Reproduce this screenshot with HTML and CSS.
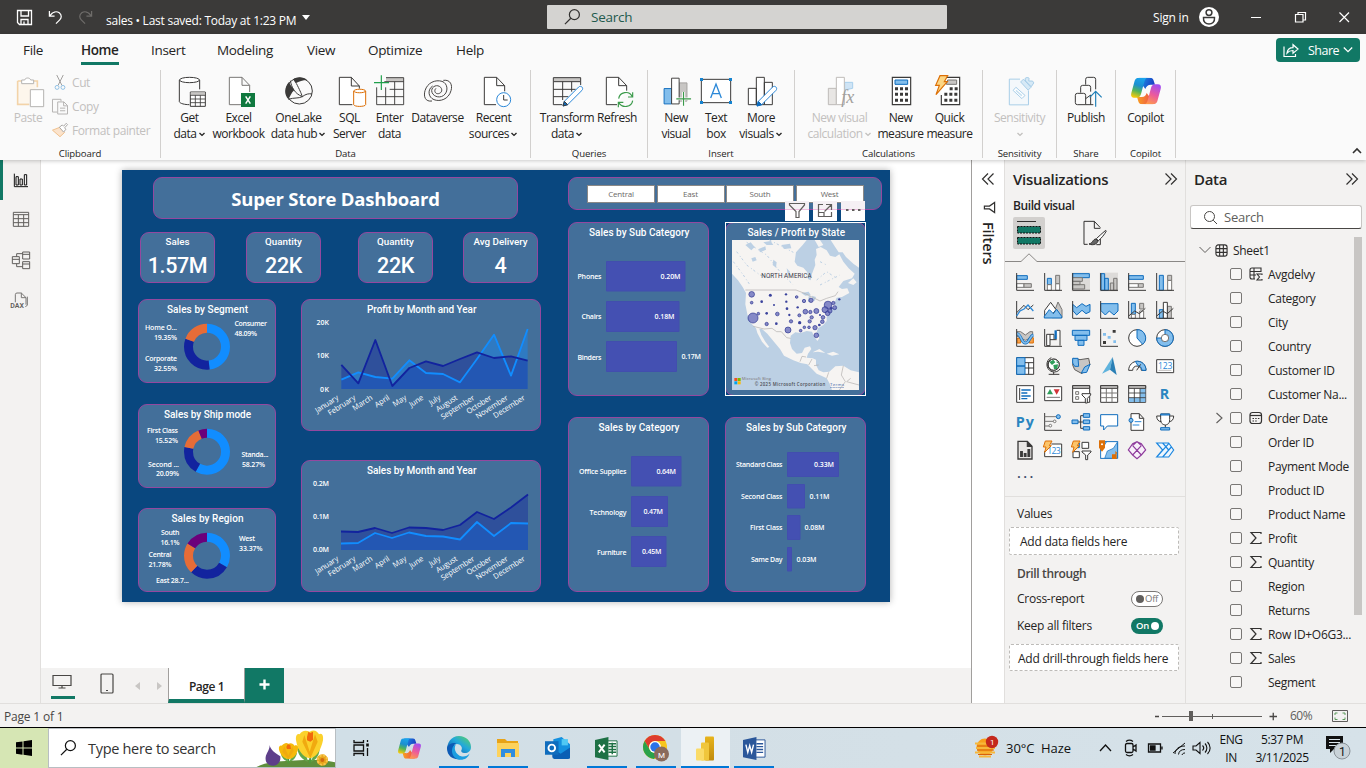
FILE: index.html
```html
<!DOCTYPE html>
<html lang="en">
<head>
<meta charset="utf-8">
<title>sales</title>
<link rel="stylesheet" href="styles.css">
</head>
<body>
<svg class="defs" width="0" height="0" aria-hidden="true">
  <defs>
    <linearGradient id="cpA" x1="0.6" y1="0" x2="0.3" y2="1"><stop offset="0" stop-color="#1aa5ee"/><stop offset=".4" stop-color="#1b8fd0"/><stop offset=".68" stop-color="#52b45a"/><stop offset="1" stop-color="#f5c90a"/></linearGradient>
    <linearGradient id="cpB" x1="0.7" y1="0" x2="0.3" y2="1"><stop offset="0" stop-color="#a44df0"/><stop offset=".5" stop-color="#ec5a9c"/><stop offset="1" stop-color="#ff9b4a"/></linearGradient>
    <linearGradient id="cpC" x1="0" y1="0" x2="1" y2="0.3"><stop offset="0" stop-color="#1a9be8"/><stop offset="1" stop-color="#1b3fc4"/></linearGradient>
    <linearGradient id="cpD" x1="0" y1="0" x2="1" y2="0"><stop offset="0" stop-color="#f8a020"/><stop offset="1" stop-color="#ee4a4e"/></linearGradient>
    <linearGradient id="edge" x1="1" y1="0" x2="0" y2="1"><stop offset="0" stop-color="#5fd65a"/><stop offset=".45" stop-color="#22a8dc"/><stop offset="1" stop-color="#0c4fa8"/></linearGradient>
    <linearGradient id="pbi" x1="0" y1="0" x2="0" y2="1"><stop offset="0" stop-color="#e8b41c"/><stop offset="1" stop-color="#c08a0c"/></linearGradient>
    <symbol id="copilot" viewBox="0 0 90 80">
      <path fill="url(#cpC)" d="M24 0H56C65 0 67 4 69 12L72 21H60C50 21 46 26 43 34L34 22Z"/>
      <path fill="url(#cpD)" d="M66 80H34C25 80 23 76 21 68L18 58H30C40 59 44 54 47 46L56 58Z"/>
      <path fill="url(#cpA)" d="M24 0H52C44 0 42 5 40 12L30 49C28 56 24 60 18 60H9C1 60-1 54 1 46L11 9C13 3 17 0 24 0Z"/>
      <path fill="url(#cpB)" d="M66 80H38C46 80 48 75 50 68L60 31C62 24 66 20 72 20H81C89 20 91 26 89 34L79 71C77 77 73 80 66 80Z"/>
    </symbol>
    <symbol id="caret" viewBox="0 0 8 8"><path d="M1.500 3L4 5.400 6.500 3" fill="none" stroke="currentColor" stroke-width="1.400"/></symbol>
    <symbol id="sigma" viewBox="0 0 14 14"><path d="M12 3V1.500H2L7 7 2 12.500H12V11" fill="none" stroke="#323130" stroke-width="1.200"/></symbol>
  </defs>
</svg>

<header class="titlebar">
  <svg class="ti-save" viewBox="0 0 17 17"><path d="M1.500 1.500H15.500V15.500H3.500L1.500 13.500ZM5 1.500V7H12.500V1.500M5 15.500V10.500H12V15.500M8 12.500V15" /></svg>
  <svg class="ti-undo" viewBox="0 0 16 16"><path d="M1.500 1.500V7H7M2 6.500C5 2.500 9 1.500 12 3.500 15 6 14.500 9 12.500 11L8.500 15"/></svg>
  <svg class="ti-undo dim" viewBox="0 0 16 16"><path d="M14.500 1.500V7H9M14 6.500C11 2.500 7 1.500 4 3.500 1 6 1.500 9 3.500 11L7.500 15"/></svg>
  <span class="doc-name">sales • Last saved: Today at 1:23 PM</span>
  <span class="tri-down"></span>
  <div class="top-search">
    <svg viewBox="0 0 18 18"><circle cx="11" cy="6.500" r="5.300"/><path d="M7.200 10.300L1 16.500"/></svg>
    <span>Search</span>
  </div>
  <span class="signin">Sign in</span>
  <svg class="avatar" viewBox="0 0 20 20"><circle cx="10" cy="10" r="10" fill="#fff"/><g fill="none" stroke="#3b3a39" stroke-width="1.500"><circle cx="10" cy="5.600" r="2.900"/><path d="M4.500 10.500H15.500C16 15 13 17 10 17S4 15 4.500 10.500Z"/></g></svg>
  <svg class="win-btns" viewBox="0 0 110 20" fill="none" stroke="#fff" stroke-width="1.200"><path d="M9 10.500H19M97.500 5.500L107 15M107 5.500L97.500 15"/><path d="M53.500 7.500H61V15H53.500ZM56 7.500V5.500H63.500V13H61"/></svg>
</header>

<section class="ribbon">
  <nav class="tabs">
    <span class="tab t-file">File</span><span class="tab t-home active">Home</span><span class="tab t-insert">Insert</span><span class="tab t-model">Modeling</span><span class="tab t-view">View</span><span class="tab t-opt">Optimize</span><span class="tab t-help">Help</span>
    <button class="share"><svg viewBox="0 0 16 14" fill="none" stroke="#fff" stroke-width="1.200"><path d="M1 3V13H12.500V10.500M4 9.500C4.500 6 7 4.200 10 4.200V1.200L15 5.600 10 9.800V7C7.500 7 5.500 7.700 4 9.500Z"/></svg>Share<svg class="chev" viewBox="0 0 10 8" fill="none" stroke="#fff" stroke-width="1.300"><path d="M.8 1.500L5 5.700 9.200 1.500"/></svg></button>
  </nav>
  <div class="groups">
    <div class="group g-clip">
      <div class="btns">
        <div class="btn disabled paste"><svg class="ico" viewBox="36 225 96 102"><path d="M53 243H71M94 243H112V262M53 243V313H88" fill="none" stroke="#f3d3a8" stroke-width="5"/><path d="M58 248H106V308H58Z" fill="#fdf6ec"/><path d="M65 251V240H74C76 232 90 232 92 240H101V251Z" fill="#fff" stroke="#b5b3b1" stroke-width="3"/><path d="M91 269H131V320H91Z" fill="#fff" stroke="#b5b3b1" stroke-width="3"/></svg><b>Paste</b></div>
        <div class="clip-list disabled">
          <span><svg viewBox="156 222 48 52" fill="none" stroke-width="3"><path d="M170 225L186 257M190 225L174 257" stroke="#a19f9d"/><circle cx="171" cy="263" r="6" stroke="#8fc0e4"/><circle cx="189" cy="263" r="6" stroke="#8fc0e4"/></svg>Cut</span>
          <span><svg viewBox="156 292 48 52" fill="#fafafa" stroke="#b5b3b1" stroke-width="3"><path d="M172 335H157V296H183V302"/><path d="M173 304H192L203 315V341H173ZM191 304V316H203M180 323H196M180 331H196"/></svg>Copy</span>
          <span><svg viewBox="156 364 48 52"><path d="M157 389L180 380 194 396 180 409Z" fill="#fbe3cc" stroke="#f0c08c" stroke-width="3"/><path d="M178 380L187 373 191 377 199 368 203 372 194 382 198 386 191 395Z" fill="#fff" stroke="#a8a6a4" stroke-width="3"/></svg>Format painter</span>
        </div>
      </div>
      <small>Clipboard</small>
    </div>
    <div class="group g-data">
      <div class="btns">
        <div class="btn w44"><svg class="ico" viewBox="519 225 96 102" fill="none" stroke="#3b3a39" stroke-width="3"><path d="M535 240V305C537 311 552 314 565 314M596 240V268" fill="none"/><ellipse cx="565.500" cy="240" rx="30" ry="8" fill="#fff"/><path d="M568 276H613V319H568Z" fill="#fff"/><path d="M569 277H612V285H569Z" fill="#c8c6c4" stroke="none"/><path d="M568 286H613M568 297H613M568 308H613M583 286V319M598 286V319" stroke-width="2.500"/></svg><b>Get<br>data<svg class="caret"><use href="#caret"/></svg></b></div>
        <div class="btn w54"><svg class="ico" viewBox="666 225 96 102"><path d="M720 314H685V232H723L746 256V276M723 232V256H746" fill="#fff" stroke="#797775" stroke-width="3"/><path d="M720 279H762V321H720Z" fill="#10793f"/><path d="M734 289L748 311M748 289L734 311" stroke="#fff" stroke-width="4.500"/></svg><b>Excel<br>workbook</b></div>
        <div class="btn w66"><svg class="ico" viewBox="846 225 96 102"><path d="M864 246C850 262 848 282 862 298 868 290 870 278 880 270 874 262 868 256 864 246ZM876 238C888 229 908 229 918 240 906 240 894 244 884 250Z" fill="#3b3a39"/><g fill="none" stroke="#3b3a39" stroke-width="3"><circle cx="895" cy="273" r="39"/><path d="M868 242C872 262 880 280 904 290 914 282 924 280 933 282M886 250C896 270 900 278 904 290M862 298C880 292 892 296 904 290"/></g></svg><b>OneLake<br>data hub<svg class="caret"><use href="#caret"/></svg></b></div>
        <div class="btn w36"><svg class="ico" viewBox="999 225 96 102" fill="#fff" stroke="#3b3a39" stroke-width="3"><path d="M1054 314H1015V232H1051L1075 258V266M1051 232V258H1075"/><path d="M1058 273V314C1060 321 1092 321 1094 314V273C1092 266 1060 266 1058 273 1060 280 1092 280 1094 273" stroke="#dc6f06"/></svg><b>SQL<br>Server</b></div>
        <div class="btn w44"><svg class="ico" viewBox="1119 225 96 102" fill="none"><path d="M1155 233H1208V245H1155Z" fill="#c8c6c4"/><path d="M1155 233H1208V314H1127V262M1150 245H1208M1166 268H1208M1127 290H1208M1154 262V314M1181 245V314" stroke="#3b3a39" stroke-width="2.800"/><path d="M1141 226V270M1119 248H1164" stroke="#1fa04b" stroke-width="3.500"/></svg><b>Enter<br>data</b></div>
        <div class="btn w52"><svg class="ico" viewBox="1266 225 96 102" fill="none" stroke="#484644" stroke-width="3"><path d="M1296 303C1276 306 1270 290 1275 272 1282 248 1306 238 1326 244 1344 250 1346 276 1330 287 1316 296 1296 288 1295 272 1296 258 1312 252 1322 262M1330 241C1352 238 1358 256 1353 272 1346 298 1320 306 1302 299 1284 292 1282 268 1298 258M1322 262C1330 272 1322 282 1312 281 1304 280 1302 270 1308 265"/></svg><b>Dataverse</b></div>
        <div class="btn w60"><svg class="ico" viewBox="66 225 96 102" fill="#fff" stroke="#3b3a39" stroke-width="3"><path d="M120 314H85V232H122L146 257V274M122 232V257H146"/><circle cx="143" cy="299" r="21" stroke="#2b88d8"/><path d="M143 285V300H155" fill="none"/></svg><b>Recent<br>sources<svg class="caret"><use href="#caret"/></svg></b></div>
      </div>
      <small>Data</small>
    </div>
    <div class="group g-query">
      <div class="btns">
        <div class="btn w56"><svg class="ico" viewBox="288 225 96 102" fill="none" stroke="#3b3a39" stroke-width="3"><path d="M295 233H377V245H295Z" fill="#c8c6c4"/><path d="M295 245V314H322M377 245V255M295 268H362M295 290H340M323 245V300M350 245V275"/><path d="M324 318L328 304 371 261C378 255 387 264 381 271L338 314Z" fill="#fff" stroke="#2b88d8"/><path d="M324 318L328 304 338 314Z" fill="#0f6cbd"/></svg><b>Transform<br>data<svg class="caret"><use href="#caret"/></svg></b></div>
        <div class="btn w44"><svg class="ico" viewBox="438 225 96 102" fill="#fff" stroke="#3b3a39" stroke-width="3"><path d="M486 314H454V232H491L515 257V272M491 232V257H515"/><path d="M491 296C494 276 522 270 532 290M533 277V291H519M533 302C530 322 502 326 491 308M490 322V307H505" fill="none" stroke="#3a9a4a" stroke-width="3.500"/></svg><b>Refresh</b></div>
      </div>
      <small>Queries</small>
    </div>
    <div class="group g-insert">
      <div class="btns">
        <div class="btn w40"><svg class="ico" viewBox="612 225 102 102"><path d="M625 265H649V314H625Z" fill="#83beec" stroke="#0f6cbd" stroke-width="3"/><path d="M673 247H698V305H673Z" fill="#c8c6c4" stroke="#a19f9d" stroke-width="3"/><path d="M649 232H673V314H649Z" fill="#fff" stroke="#3b3a39" stroke-width="3"/><path d="M687 276V320M664 298H711" stroke="#fafafa" stroke-width="9"/><path d="M687 276V320M664 298H711" stroke="#3a9a4a" stroke-width="3.500"/></svg><b>New<br>visual</b></div>
        <div class="btn w40"><svg class="ico" viewBox="735 225 96 102"><path d="M739 238H827V308H739Z" fill="#fff" stroke="#3b3a39" stroke-width="3"/><path d="M735 234H744V243H735ZM822 234H831V243H822ZM735 303H744V312H735ZM822 303H831V312H822Z" fill="#1583d0"/><path d="M767 294L783 252 799 294M772 281H794" fill="none" stroke="#2b88d8" stroke-width="4"/></svg><b>Text<br>box</b></div>
        <div class="btn w50"><svg class="ico" viewBox="870 225 96 102" fill="#fff" stroke="#3b3a39" stroke-width="3"><path d="M880 265H904V314H880ZM928 247H952V314H928ZM904 232H928V314H904Z"/><path d="M906 318L910 304 953 261C960 255 969 264 963 271L920 314Z" stroke="#2b88d8"/><path d="M906 318L910 304 920 314Z" fill="#0f6cbd" stroke="#0f6cbd"/></svg><b>More<br>visuals<svg class="caret"><use href="#caret"/></svg></b></div>
      </div>
      <small>Insert</small>
    </div>
    <div class="group g-calc">
      <div class="btns">
        <div class="btn w78 disabled"><svg class="ico" viewBox="1104 225 96 102" stroke-width="3" stroke="#bebbb8"><path d="M1117 265H1141V314H1117Z" fill="#e8e6e4"/><path d="M1166 247H1190V265L1166 270Z" fill="#cfe4f5" stroke="#a8cfec"/><path d="M1141 232H1165V314H1141Z" fill="#fff"/><text x="1156" y="308" class="fx">fx</text></svg><b>New visual<br>calculation<svg class="caret"><use href="#caret"/></svg></b></div>
        <div class="btn w44"><svg class="ico" viewBox="1284 225 96 102"><path d="M1306 232H1361V314H1306Z" fill="#fff" stroke="#3b3a39" stroke-width="3.500"/><path d="M1314 240H1352V253H1314Z" fill="#83beec" stroke="#0f6cbd" stroke-width="3"/><path d="M1314 266H1356M1314 283H1356M1314 301H1356" stroke="#3b3a39" stroke-width="9" stroke-dasharray="9 6"/></svg><b>New<br>measure</b></div>
        <div class="btn w54"><svg class="ico" viewBox="81 225 96 102"><path d="M106 232H158V314H103V285" fill="#fff" stroke="#3b3a39" stroke-width="3.500"/><path d="M122 240H149V253H118Z" fill="#c8c6c4" stroke="#797775" stroke-width="3"/><path d="M128 266H152M112 283H152M112 301H152" stroke="#3b3a39" stroke-width="9" stroke-dasharray="9 6"/><path d="M99 227H122L112 245H121L87 284 97 256H86Z" fill="#fcd684" stroke="#dc6f06" stroke-width="3.500"/></svg><b>Quick<br>measure</b></div>
      </div>
      <small>Calculations</small>
    </div>
    <div class="group g-sens">
      <div class="btns">
        <div class="btn w72 disabled"><svg class="ico" viewBox="293 222 102 102" fill="#fff" stroke="#a3cbe6" stroke-width="3"><path d="M344 232H310V314H371V268" fill="#f4f8fb"/><path d="M331 258L360 284 350 294 322 268Z"/><path d="M331 268L350 285" stroke-width="5" stroke="#c5dff0"/><path d="M346 241L355 232 379 258 370 267ZM362 238L360 230C364 226 370 226 373 229L372 238 384 238 388 244 380 256Z" fill="#d6e9f6"/></svg><b>Sensitivity<br><svg class="caret solo"><use href="#caret"/></svg></b></div>
      </div>
      <small>Sensitivity</small>
    </div>
    <div class="group g-share">
      <div class="btns">
        <div class="btn w58"><svg class="ico" viewBox="492 225 96 102" fill="none" stroke="#3b3a39" stroke-width="3"><path d="M524 278V262Q524 256 530 256H548Q554 256 554 262V275M539 254V238Q539 232 545 232H563Q569 232 569 238V268M539 314H514Q508 314 508 308V286Q508 280 514 280H533Q539 280 539 286V314H562M539 296L554 285V314"/><path d="M569 320V276M551 292L569 274 587 292" stroke="#1f7fb8" stroke-width="3.500"/></svg><b>Publish</b></div>
      </div>
      <small>Share</small>
    </div>
    <div class="group g-cop">
      <div class="btns">
        <div class="btn w58"><svg class="ico" viewBox="-3 -8 96 102"><use href="#copilot" width="90" height="80"/></svg><b>Copilot</b></div>
      </div>
      <small>Copilot</small>
    </div>
    <svg class="collapse" viewBox="0 0 10 8" fill="none" stroke="#323130" stroke-width="1.600"><path d="M1 6L5 2 9 6"/></svg>
  </div>
</section>

<main class="work">
  <aside class="rail">
    <div class="rail-item on"><svg viewBox="36 35 54 51" fill="none" stroke="#111" stroke-width="3"><path d="M43 40V79H84M48 49H55V74H48ZM60 56H67V74H60ZM73 43H80V74H73Z"/></svg></div>
    <div class="rail-item"><svg viewBox="36 153 54 51" fill="none" stroke="#605e5c" stroke-width="3"><path d="M40 157H86V199H40ZM40 164H86M40 176H86M40 188H86M55 164V199M71 164V199"/></svg></div>
    <div class="rail-item"><svg viewBox="36 275 54 51" fill="none" stroke="#605e5c" stroke-width="3"><path d="M37 289H58V310H37ZM37 297H58M68 275H89V296H68ZM68 282H89M68 304H89V325H68ZM68 311H89M50 289V280H68M50 310V319H68"/></svg></div>
    <div class="rail-item"><svg viewBox="30 394 57 51" fill="none" stroke="#797775" stroke-width="3"><path d="M46 425V402Q46 397 51 397H64L78 411V432M64 397V411H78M82 408V434L76 438"/><text x="31" y="443" class="dax">DAX</text></svg></div>
  </aside>

  <section class="stage">
    <div class="canvas">
      <div class="report">
        <div class="left">
          <div class="tile heading">Super Store Dashboard</div>
          <div class="cards">
            <div class="tile card"><em>Sales</em><strong>1.57M</strong></div>
            <div class="tile card"><em>Quantity</em><strong>22K</strong></div>
            <div class="tile card"><em>Quantity</em><strong>22K</strong></div>
            <div class="tile card"><em>Avg Delivery</em><strong>4</strong></div>
          </div>
          <div class="pair">
            <div class="donuts">
              <div class="tile"><svg viewBox="139 300 136 82"><text class="tt" x="167" y="312.500" textLength="81">Sales by Segment</text>
                <g class="ring" transform="rotate(-90 207 346.700)"><circle cx="207" cy="346.700" r="18.500" pathLength="100" stroke="#118dff" stroke-dasharray="48.090 100"/><circle cx="207" cy="346.700" r="18.500" pathLength="100" stroke="#12239e" stroke-dasharray="32.550 100" stroke-dashoffset="-48.090"/><circle cx="207" cy="346.700" r="18.500" pathLength="100" stroke="#e66c37" stroke-dasharray="19.360 100" stroke-dashoffset="-80.640"/></g>
                <g class="lb"><text x="145" y="329.500" textLength="32">Home O...</text><text x="154" y="339.500" textLength="23">19.35%</text><text x="145" y="361.300" textLength="32">Corporate</text><text x="154" y="371.300" textLength="23">32.55%</text><text x="234.500" y="326.200" textLength="32.500">Consumer</text><text x="234.500" y="336.300" textLength="22.500">48.09%</text></g></svg></div>
              <div class="tile"><svg viewBox="139 405 136 82"><text class="tt" x="164" y="417.500" textLength="87">Sales by Ship mode</text>
                <g class="ring" transform="rotate(-90 207 451.700)"><circle cx="207" cy="451.700" r="18.500" pathLength="100" stroke="#118dff" stroke-dasharray="58.270 100"/><circle cx="207" cy="451.700" r="18.500" pathLength="100" stroke="#12239e" stroke-dasharray="20.090 100" stroke-dashoffset="-58.270"/><circle cx="207" cy="451.700" r="18.500" pathLength="100" stroke="#e66c37" stroke-dasharray="15.520 100" stroke-dashoffset="-78.360"/><circle cx="207" cy="451.700" r="18.500" pathLength="100" stroke="#6b007b" stroke-dasharray="6.120 100" stroke-dashoffset="-93.880"/></g>
                <g class="lb"><text x="147" y="433.300" textLength="31">First Class</text><text x="155" y="443.300" textLength="23">15.52%</text><text x="148" y="466.500" textLength="31">Second ...</text><text x="156" y="476.300" textLength="23">20.09%</text><text x="241.500" y="457.300" textLength="27">Standa...</text><text x="242" y="466.500" textLength="23">58.27%</text></g></svg></div>
              <div class="tile"><svg viewBox="139 509 136 82"><text class="tt" x="171.500" y="521.500" textLength="72">Sales by Region</text>
                <g class="ring" transform="rotate(-90 207 555.700)"><circle cx="207" cy="555.700" r="18.500" pathLength="100" stroke="#118dff" stroke-dasharray="33.370 100"/><circle cx="207" cy="555.700" r="18.500" pathLength="100" stroke="#12239e" stroke-dasharray="28.750 100" stroke-dashoffset="-33.370"/><circle cx="207" cy="555.700" r="18.500" pathLength="100" stroke="#e66c37" stroke-dasharray="21.780 100" stroke-dashoffset="-62.120"/><circle cx="207" cy="555.700" r="18.500" pathLength="100" stroke="#6b007b" stroke-dasharray="16.100 100" stroke-dashoffset="-83.900"/></g>
                <g class="lb"><text x="161" y="535" textLength="18.500">South</text><text x="160.500" y="545" textLength="19">16.1%</text><text x="148.500" y="557" textLength="23">Central</text><text x="148.500" y="567" textLength="23">21.78%</text><text x="156" y="583" textLength="33">East 28.7...</text><text x="239" y="541" textLength="16">West</text><text x="239" y="551" textLength="23.500">33.37%</text></g></svg></div>
            </div>
            <div class="trends">
              <div class="tile"><svg viewBox="302 300 238 130"><text class="tt" x="367" y="312.500" textLength="109.500">Profit by Month and Year</text>
                <g class="lb"><text x="316.500" y="325" textLength="12.500">20K</text><text x="316.500" y="358" textLength="12.500">10K</text><text x="320" y="392" textLength="9">0K</text></g>
                <g transform="translate(280 160) scale(.33333)"><path class="a1" d="M184 687V659L235 637 286 651 337 656 388 601 438 639 489 642 540 667 591 597 642 524 693 647 743 507V687Z"/><path class="a2" d="M184 687V615L235 670 286 540 337 678 388 624 438 604 489 618 540 597 591 577 642 594 693 589 743 602V687Z"/><path class="l1" d="M184 659L235 637 286 651 337 656 388 601 438 639 489 642 540 667 591 597 642 524 693 647 743 507"/><path class="l2" d="M184 615L235 670 286 540 337 678 388 624 438 604 489 618 540 597 591 577 642 594 693 589 743 602"/></g>
                <g class="lb mo"><text transform="translate(339 399) rotate(-33)">January</text><text transform="translate(356 399) rotate(-33)">February</text><text transform="translate(373 399) rotate(-33)">March</text><text transform="translate(390 399) rotate(-33)">April</text><text transform="translate(407 399) rotate(-33)">May</text><text transform="translate(424 399) rotate(-33)">June</text><text transform="translate(441 399) rotate(-33)">July</text><text transform="translate(458 399) rotate(-33)">August</text><text transform="translate(475 399) rotate(-33)">September</text><text transform="translate(492 399) rotate(-33)">October</text><text transform="translate(508.500 399) rotate(-33)">November</text><text transform="translate(525.500 399) rotate(-33)">December</text></g></svg></div>
              <div class="tile"><svg viewBox="302 461 238 130"><text class="tt" x="367" y="473.500" textLength="109.500">Sales by Month and Year</text>
                <g class="lb"><text x="313" y="486" textLength="16">0.2M</text><text x="313" y="519" textLength="16">0.1M</text><text x="313" y="552" textLength="16">0.0M</text></g>
                <path class="a1" d="M341 550V543.500L358 543 375 533 392 538 409 532.500 426 536 443 536.500 460 539.500 477 522 494 536 511 523 528 523.500V550Z"/><path class="a2" d="M341 550V531.500L358 532 375 528 392 533 409 527.500 426 528 443 530 460 525 477 512 494 519 511 507.500 528 494.500V550Z"/><path class="l1 px" d="M341 543.500L358 543 375 533 392 538 409 532.500 426 536 443 536.500 460 539.500 477 522 494 536 511 523 528 523.500"/><path class="l2 px" d="M341 531.500L358 532 375 528 392 533 409 527.500 426 528 443 530 460 525 477 512 494 519 511 507.500 528 494.500"/>
                <g class="lb mo"><text transform="translate(339 560) rotate(-33)">January</text><text transform="translate(356 560) rotate(-33)">February</text><text transform="translate(373 560) rotate(-33)">March</text><text transform="translate(390 560) rotate(-33)">April</text><text transform="translate(407 560) rotate(-33)">May</text><text transform="translate(424 560) rotate(-33)">June</text><text transform="translate(441 560) rotate(-33)">July</text><text transform="translate(458 560) rotate(-33)">August</text><text transform="translate(475 560) rotate(-33)">September</text><text transform="translate(492 560) rotate(-33)">October</text><text transform="translate(508.500 560) rotate(-33)">November</text><text transform="translate(525.500 560) rotate(-33)">December</text></g></svg></div>
            </div>
          </div>
        </div>
        <div class="right">
          <div class="tile slicer"><span>Central</span><span>East</span><span>South</span><span>West</span></div>
          <div class="quad">
            <div class="tile"><svg viewBox="569 223 139 172"><text class="tt" x="589" y="235.500" textLength="100.500">Sales by Sub Category</text>
              <path class="bar" d="M606.500 261.500H685V291H606.500ZM606.500 301.500H679V331.500H606.500ZM606.500 341.500H676.500V371.500H606.500Z"/>
              <g class="lb"><text x="577.500" y="279" textLength="24">Phones</text><text x="581.500" y="319" textLength="20">Chairs</text><text x="577.500" y="360" textLength="24">Binders</text><text x="660.500" y="279" textLength="20">0.20M</text><text x="654.500" y="319" textLength="20">0.18M</text><text x="681.500" y="359" textLength="19.500">0.17M</text></g></svg></div>
            <div class="tile selected"><svg viewBox="726 223 139 172"><text class="tt" x="747.500" y="235.500" textLength="97.500">Sales / Profit by State</text>
              <svg x="732" y="240" width="127" height="150" viewBox="516 225 381 450">
                <path fill="#bcd0e4" d="M516 225H897V675H516Z"/>
                <path fill="#f6f4f2" d="M516 225H740L728 240 708 262 704 290 712 302 730 308 742 322 744 342 752 346 756 326 760 316 766 300 764 284 770 270 768 252 782 246 800 256 810 272 826 276 838 268 850 290 866 310 884 326 876 340 850 348 836 366 846 372 862 370 868 384 846 396 830 398 824 412 826 428 814 432 808 446 800 456 800 468 790 480 774 490 770 502 778 520 772 528 762 514 756 500 740 498 722 504 706 502 692 512 690 534 696 552 710 566 726 564 734 548 750 544 754 552 744 566 740 578 758 580 768 584 768 600 776 616 790 622 808 620 826 604 850 602 872 616 897 622V675H816L808 654 800 640 784 632 770 626 756 612 742 598 722 594 700 586 672 572 660 552 640 528 622 506 606 492 598 492 604 510 616 530 628 546 622 548 606 530 592 504 588 490 572 474 562 448 556 418 558 384 548 366 534 346 516 326Z"/>
                <path fill="#f6f4f2" d="M764 225H780L790 240 776 246ZM812 225H897V308L880 296 858 276 848 262 836 262 824 244ZM864 354L880 340 890 352 880 360ZM758 562L778 552 796 564 774 560ZM800 566L820 560 838 568 816 572Z"/>
                <path fill="#bcd0e4" d="M556 240L572 232 584 246 574 256ZM596 252L616 244 618 254 600 262ZM640 284L650 292 648 308 638 300ZM610 232L632 228 640 240 620 240ZM664 240L690 236 694 250 672 252ZM574 280L586 276 590 286 578 290ZM680 310L690 320 684 332ZM724 384L746 380 752 390 736 392ZM746 394L752 392 750 412 744 410ZM756 392L768 396 764 408 758 404Z"/>
                <path fill="none" stroke="#b0aeac" stroke-width="2" d="M556 375H708L736 386 760 398 780 408 800 400 826 392 834 380M580 484L612 492 636 490 650 500 664 500 680 518 692 520M720 590L726 574 738 576M756 582L746 600M776 600L762 602M800 640L806 622M850 602L844 630 856 650 838 675M872 640L860 650 897 660"/>
                <path fill="none" stroke="#bcd0e4" stroke-width="3" stroke-dasharray="7 9 3 6" d="M530 260L560 300 600 330 640 340M560 232L620 270 660 320 700 360M520 290L550 330 570 360M770 345L800 320 830 340M780 290L800 300M780 360L840 330M628 225L700 262"/>
                <text x="604" y="339" textLength="151" class="cont">NORTH AMERICA</text>
                <g fill="#5f66b8" fill-opacity=".75" stroke="#2d3590" stroke-width="2">
                  <circle cx="575" cy="388" r="8.500"/><circle cx="579" cy="459" r="15"/><circle cx="684" cy="495" r="9"/><circle cx="804" cy="420" r="11.500"/><circle cx="795" cy="434" r="9"/><circle cx="736" cy="440" r="7"/><circle cx="769" cy="438" r="7.500"/><circle cx="753" cy="406" r="6.500"/><circle cx="765" cy="488" r="6.500"/><circle cx="769" cy="511" r="7"/><circle cx="732" cy="408" r="5"/><circle cx="652" cy="447" r="5.500"/><circle cx="693" cy="469" r="5"/><circle cx="620" cy="477" r="5"/><circle cx="595" cy="446" r="4"/><circle cx="575" cy="413" r="4"/><circle cx="751" cy="441" r="5"/><circle cx="755" cy="457" r="5"/><circle cx="749" cy="469" r="5"/><circle cx="789" cy="457" r="5.500"/><circle cx="787" cy="470" r="5.500"/><circle cx="803" cy="445" r="7"/><circle cx="810" cy="438" r="6"/><circle cx="820" cy="414" r="5"/><circle cx="824" cy="428" r="6"/><circle cx="718" cy="451" r="4.500"/><circle cx="710" cy="396" r="4"/><circle cx="747" cy="487" r="4"/><circle cx="733" cy="487" r="4"/><circle cx="722" cy="497" r="4"/></g>
                <g fill="#3a429c"><circle cx="631" cy="391" r="4.500"/><circle cx="605" cy="410" r="4"/><circle cx="642" cy="420" r="3"/><circle cx="620" cy="445" r="4"/><circle cx="649" cy="476" r="4"/><circle cx="678" cy="388" r="3.500"/><circle cx="679" cy="410" r="3.500"/><circle cx="681" cy="431" r="4"/><circle cx="688" cy="450" r="3.500"/><circle cx="713" cy="427" r="3.500"/><circle cx="719" cy="473" r="5"/><circle cx="780" cy="450" r="3"/><circle cx="778" cy="480" r="4"/><circle cx="838" cy="403" r="3.500"/><circle cx="814" cy="430" r="4"/></g>
                <path fill="#f25022" d="M523 639H532V648H523Z"/><path fill="#7fba00" d="M533 639H542V648H533Z"/><path fill="#00a4ef" d="M523 649H532V658H523Z"/><path fill="#ffb900" d="M533 649H542V658H533Z"/>
                <text x="545" y="646" textLength="88" class="ms">Microsoft Bing</text><text x="584" y="664" textLength="212" class="copy">© 2025 Microsoft Corporation</text><text x="810" y="664" textLength="42" class="terms">Terms</text>
              </svg></svg></div>
            <div class="tile"><svg viewBox="569 418 139 173"><text class="tt" x="598.500" y="430.500" textLength="81">Sales by Category</text>
              <path class="bar" d="M631.500 456.500H681V486H631.500ZM631.500 496.500H667.500V526.500H631.500ZM631.500 536.500H666V566.500H631.500Z"/>
              <g class="lb"><text x="579" y="474" textLength="47.500">Office Supplies</text><text x="589.500" y="515" textLength="37">Technology</text><text x="597" y="555" textLength="29.500">Furniture</text><text x="656.500" y="474" textLength="19.500">0.64M</text><text x="643.500" y="514" textLength="19.500">0.47M</text><text x="642" y="554" textLength="19.500">0.45M</text></g></svg></div>
            <div class="tile"><svg viewBox="726 418 139 173"><text class="tt" x="746" y="430.500" textLength="100.500">Sales by Sub Category</text>
              <path class="bar" d="M787.500 452.500H838.500V476.500H787.500ZM787.500 484.500H804.500V508H787.500ZM787.500 515.500H800V539.500H787.500ZM787.500 547.500H791.500V571H787.500Z"/>
              <g class="lb"><text x="736" y="467" textLength="46.500">Standard Class</text><text x="741" y="499" textLength="41.500">Second Class</text><text x="750" y="530" textLength="32.500">First Class</text><text x="751" y="562" textLength="31.500">Same Day</text><text x="814" y="467" textLength="20">0.33M</text><text x="809.500" y="499" textLength="20">0.11M</text><text x="804.500" y="530" textLength="20">0.08M</text><text x="796.500" y="562" textLength="20">0.03M</text></g></svg></div>
          </div>
        </div>
        <div class="tools">
          <span><svg viewBox="0 0 24 20"><path d="M4.500 2.500H19.500V4L14 10.500V16.500H11V10.500L4.500 4Z"/></svg></span>
          <span><svg viewBox="0 0 24 20"><path d="M10 3.500H5.500V15.500H18.500V11M13 3.500H18.500V9M18.500 3.500L11.500 10.500M5.500 11.500H11V15.500"/></svg></span>
          <span><svg viewBox="0 0 24 20"><path d="M5 9H7.500M11 9H13.500M17 9H19.500" stroke-width="2"/></svg></span>
        </div>
      </div>
    </div>
    <div class="pages">
      <div class="dev on"><svg viewBox="0 0 20 16" fill="none" stroke="#484644" stroke-width="1.200"><path d="M1 1.500H19V11.500H1ZM10 11.500V14M6.500 14H13.500"/></svg></div>
      <div class="dev phone"><svg viewBox="0 0 14 21" fill="none" stroke="#484644" stroke-width="1.200"><rect x="1" y="1" width="12" height="19" rx="1"/><path d="M6 17.500H8"/></svg></div>
      <i class="arr l"></i><i class="arr r"></i>
      <div class="page-tab">Page 1</div>
      <div class="add"><svg viewBox="0 0 12 12"><path d="M6 .5V11.500M.5 6H11.500" stroke="#fff" stroke-width="2.600"/></svg></div>
    </div>
  </section>

  <aside class="filters">
    <svg class="dbl" viewBox="0 0 14 14"><path d="M7 1.500L1.500 7 7 12.500M12.500 1.500L7 7 12.500 12.500"/></svg>
    <svg class="funnel" viewBox="0 0 14 14"><path d="M12.500 1.500V12.500L7 8.500H1.500V5.500H7Z"/></svg>
    <span>Filters</span>
  </aside>

  <aside class="viz">
    <div class="pane-head"><h2>Visualizations</h2><svg class="dbl" viewBox="0 0 14 14"><path d="M1.500 1.500L7 7 1.500 12.500M7 1.500L12.500 7 7 12.500"/></svg></div>
    <h3>Build visual</h3>
    <div class="modes">
      <div class="mode on"><svg viewBox="0 0 32 32"><path d="M4 4.500H23" stroke="#323130"/><path d="M4.500 9.500H27.500V16H4.500ZM4.500 20.500H27.500V27H4.500Z" fill="#117865" stroke="#111" stroke-dasharray="2 1"/></svg></div>
      <div class="mode fmt"><svg viewBox="365 180 81 81" fill="none" stroke="#323130" stroke-width="3"><path d="M382 253H371V184H402L420 203M402 184V205H420M420 236V254H408"/><path d="M436 211C426 220 416 228 408 236L414 242C424 234 432 224 438 213Z" fill="#fff"/><path d="M407 237C396 238 400 248 386 252 400 258 412 250 413 243Z" fill="#666"/></svg></div>
    </div>
    <svg class="notch" viewBox="0 0 180 10" fill="none" stroke="#8a8886"><path d="M0 8.500H16L24 .8 32 8.500H180"/></svg>
    <div class="vgrid">
      <svg viewBox="-3 -3 60 60"><path class="b" d="M2 8H34V19H2Z"/><path class="w" d="M2 32H24V43H2Z"/><path class="g" d="M24 32H46V43H24Z"/><path class="k" d="M2 0V52H54"/></svg>
      <svg viewBox="-3 -3 60 60"><path class="b" d="M10 16H22V35H10Z"/><path class="w" d="M10 35H22V52H10ZM35 32H47V52H35Z"/><path class="g" d="M35 7H47V32H35Z"/><path class="k" d="M2 0V52H54"/></svg>
      <svg viewBox="-3 -3 60 60"><path d="M-1-1H54V55H-1Z" fill="#dddbd9"/><path class="b" d="M2 2H52V14H2Z"/><path class="g" d="M2 14H31V25H2ZM2 25H24V35H2ZM2 35H38V48H2Z"/><path class="k" d="M2 0V52H54"/></svg>
      <svg viewBox="-3 -3 60 60"><path d="M-1-1H54V55H-1Z" fill="#dddbd9"/><path class="b" d="M3 2H14V52H3ZM14 16H25V52H14Z"/><path class="g" d="M31 30H41V52H31ZM41 16H51V52H41Z"/><path class="k" d="M2 0V52H54"/></svg>
      <svg viewBox="-3 -3 60 60"><path class="b" d="M2 8H46V19H2Z"/><path class="w" d="M2 32H31V43H2Z"/><path class="g" d="M31 32H46V43H31Z"/><path class="k" d="M2 0V52H54"/></svg>
      <svg viewBox="-3 -3 60 60"><path class="b" d="M10 7H22V52H10Z"/><path class="w" d="M35 22H47V52H35Z"/><path class="g" d="M35 7H47V22H35Z"/><path class="k" d="M2 0V52H54"/></svg>

      <svg viewBox="-3 -3 60 60"><path class="k" d="M2 0V52H54M2 35L24 13 36 26 52 12"/><path d="M2 45L12 30 24 24 36 12 52 30" fill="none" stroke="#2b88d8" stroke-width="4"/></svg>
      <svg viewBox="-3 -3 60 60"><path class="g" d="M24 50L42 3 54 26V50Z"/><path class="wk" d="M2 50L2 28 20 4 36 26 20 46Z"/><path class="b" d="M1 51V46L16 26 28 38 38 25 53 46V51Z"/></svg>
      <svg viewBox="-3 -3 60 60"><path class="b" d="M2 10L14 20 30 8 42 16 54 10V32L42 38 30 28 14 42 2 28Z"/><path class="k" d="M2 0V52H54"/></svg>
      <svg viewBox="-3 -3 60 60"><path class="b" d="M2 8H54V30L42 42 28 30 16 42 2 28Z"/><path class="k" d="M2 0V52H54"/></svg>
      <svg viewBox="-3 -3 60 60"><path class="b" d="M10 7H22V40H10Z"/><path class="w" d="M10 40H22V52H10ZM35 30H47V52H35Z"/><path class="g" d="M35 7H47V24H35Z"/><path class="k" d="M2 0V52H54M2 45L20 30 34 38 52 22"/></svg>
      <svg viewBox="-3 -3 60 60"><path class="b" d="M10 26H22V52H10Z"/><path class="g" d="M34 16H46V52H34Z"/><path class="wk" d="M22 4H34V52H22Z"/><path class="k" d="M2 0V52H54M2 45L20 30 34 38 52 22"/></svg>

      <svg viewBox="-3 -3 60 60"><path class="g" d="M3 8L14 8 28 18 42 8H50V24L28 34 3 22Z"/><path d="M3 28H14V42H3ZM40 26H52V42H40Z" fill="#f5a04a" stroke="#dc6f06" stroke-width="3"/><path d="M3 14C16 16 16 42 28 42S42 20 52 18" fill="none" stroke="#0f6cbd" stroke-width="9"/><path d="M3 14C16 16 16 42 28 42S42 20 52 18" fill="none" stroke="#83beec" stroke-width="5"/><path class="k" d="M2 0V52H54"/></svg>
      <svg viewBox="-3 -3 60 60"><path class="wk" d="M8 16H18V50H8ZM18 16H30V32H18M30 32H38M38 4H48V50"/><path d="M35 4V30" stroke="#0f6cbd" stroke-width="7"/><path class="k" d="M2 0V52H54"/></svg>
      <svg viewBox="-3 -3 60 60"><path class="b" d="M1 4H53V19H1ZM9 19H45V34H9ZM18 34H36V49H18Z"/></svg>
      <svg viewBox="-3 -3 60 60"><path class="k" d="M2 0V52H54"/><path fill="#3b3a39" d="M38 3H47V11H38ZM9 36H18V45H9Z"/><path fill="#83beec" d="M9 12H18V20H9ZM23 21H32V29H23ZM40 34H48V42H40Z"/></svg>
      <svg viewBox="-3 -3 60 60"><circle class="wk" cx="27" cy="27" r="25"/><path class="b" d="M27 2A25 25 0 0 1 44 46L27 27Z"/></svg>
      <svg viewBox="-3 -3 60 60"><circle class="wk" cx="27" cy="27" r="25"/><path class="b" d="M27 2A25 25 0 1 1 2 27H16A11 11 0 1 0 27 16Z"/><circle cx="27" cy="27" r="11" class="w"/></svg>

      <svg viewBox="-3 -3 60 60"><path class="wk" d="M2 2H53V52H2Z"/><path class="b" d="M2 2H27V27H2ZM2 27H27V52H2Z"/><path class="k" d="M27 17H53M38 17V35M38 33H53M27 33H38V52"/></svg>
      <svg viewBox="-3 -3 60 60"><circle class="w" cx="29" cy="23" r="17"/><path fill="#2f9e5b" d="M16 15L28 8 34 16 24 24ZM28 24L42 22 40 36 30 36ZM38 12L44 18H38Z"/><path class="k" d="M22 2C4 8 4 38 24 44 34 47 44 43 48 36M29 45V52M14 52H46M18 8A20 20 0 0 0 22 40"/><circle class="k" cx="29" cy="23" r="17"/></svg>
      <svg viewBox="-3 -3 60 60"><path class="gk" d="M4 4L24 8 50 4 54 24 42 36 30 50 8 38 2 24Z"/><path class="b" d="M2 4H18L20 28H8L2 18ZM54 22L38 30 28 48 44 46Z"/></svg>
      <svg viewBox="-3 -3 60 60"><path fill="#5fb3dd" d="M38 0L6 50 30 38Z"/><path fill="#2a7fb5" d="M38 0L30 38 50 54Z"/></svg>
      <svg viewBox="-3 -3 60 60"><path class="wk" d="M2 40C2 24 14 13 28 13S54 24 54 40H40C40 32 34 27 27 27S14 32 14 40Z"/><path class="b" d="M22 13C40 10 54 22 54 40H42C40 30 36 26 30 26Z"/><path class="k" d="M26 40L38 22"/></svg>
      <svg viewBox="-3 -3 60 60"><path class="wk" d="M2 8H53V47H2Z"/><text x="6" y="36" textLength="43" class="n123">123</text><path d="M8 40H46" stroke="#a19f9d" stroke-width="2"/></svg>

      <svg viewBox="-3 -3 60 60"><path class="wk" d="M2 2H53V52H2Z"/><path d="M11 9V45" stroke="#3b3a39" stroke-width="3"/><path d="M16 15H44M16 24H34M16 33H44M16 41H34" stroke="#0f6cbd" stroke-width="4"/></svg>
      <svg viewBox="-3 -3 60 60"><path class="wk" d="M2 5H53V47H2Z"/><path fill="#2f9e5b" d="M18 12L27 28H9Z"/><path fill="#d13438" d="M38 29L29 13H47Z"/><path d="M8 37H48" stroke="#797775" stroke-width="3"/></svg>
      <svg viewBox="-3 -3 60 60"><path class="wk" d="M2 2H53V52H2Z"/><path fill="#c8c6c4" stroke="#3b3a39" stroke-width="3" d="M2 2H53V10H2Z"/><path class="w" d="M11 20H20V28H11ZM11 35H20V43H11Z"/><path class="wk" d="M30 26H56V30L46 40V54H40V40L30 30Z"/></svg>
      <svg viewBox="-3 -3 60 60"><path class="wk" d="M2 2H53V52H2Z"/><path class="w" d="M2 24H53M2 38H53M19 10V52M36 10V52"/><path fill="#c8c6c4" stroke="#3b3a39" stroke-width="3" d="M2 2H53V10H2Z"/></svg>
      <svg viewBox="-3 -3 60 60"><path class="wk" d="M2 2H53V52H2Z"/><path fill="#83beec" d="M36 10H52V51H3V38H36Z"/><path class="w2" d="M2 24H53M2 38H53M19 10V52M36 10V52"/><path fill="#c8c6c4" stroke="#3b3a39" stroke-width="3" d="M2 2H53V10H2Z"/></svg>
      <svg viewBox="-3 -3 60 60"><text x="11" y="43" textLength="27" class="rpy">R</text></svg>

      <svg viewBox="-3 -3 60 60"><text x="-1" y="42" textLength="55" class="rpy">Py</text></svg>
      <svg viewBox="-3 -3 60 60"><path class="k" d="M2 0V52H54"/><path d="M2 11H38M2 25H28M2 39H16" stroke="#797775" stroke-width="3"/><circle cx="43" cy="11" r="6" class="b"/><circle cx="32" cy="25" r="4" class="w"/><circle cx="19" cy="38" r="4" class="w"/></svg>
      <svg viewBox="-3 -3 60 60"><path class="k" d="M18 27H34M26 8V46M26 8H36M26 46H36"/><path class="b" d="M0 21H18V32H0ZM34 2H53V13H34ZM34 21H53V32H34ZM34 41H53V51H34Z"/></svg>
      <svg viewBox="-3 -3 60 60"><path d="M2 5H53V39H22L11 51V39H2Z" fill="#fff" stroke="#0f6cbd" stroke-width="3"/></svg>
      <svg viewBox="-3 -3 60 60"><path class="wk" d="M9 2H34L47 16V52H9ZM34 2V16H47"/><circle cx="9" cy="22" r="6" class="b"/><path d="M20 26H40M14 36H34" stroke="#2b88d8" stroke-width="3"/></svg>
      <svg viewBox="-3 -3 60 60"><path class="wk" d="M14 3H41V20C41 34 32 35 28 36 24 35 14 34 14 20ZM14 9H2C2 20 8 26 16 26M41 9H53C53 20 47 26 39 26M28 36V44"/><path class="b" d="M14 44H41V51H14ZM14 3H41V6H14Z"/></svg>

      <svg viewBox="-3 -3 60 60"><path d="M6 1H34L48 16V54H6Z" fill="#e8e6e4" stroke="#3b3a39" stroke-width="4"/><path d="M34 1V16H48M14 48V32H19V48M25 48V38H30V48M36 48V26H41V48" stroke="#3b3a39" stroke-width="3.500" fill="#3b3a39"/></svg>
      <svg viewBox="-3 -3 60 60"><path class="wk" d="M22 9H53V47H2V30"/><text x="10" y="38" textLength="40" class="n123">123</text><path class="bolt" d="M4 0H24L16 14H22L2 34 6 18H-2Z"/></svg>
      <svg viewBox="-3 -3 60 60"><path class="b" d="M14 6H22V20H14Z"/><path class="wk" d="M30 4H50V22H30ZM3 32H22V50H3Z"/><path class="wk" d="M30 30H57V33L47 42V56H41V42L30 33Z"/><path class="bolt" d="M4 0H24L16 14H22L2 34 6 18H-2Z"/></svg>
      <svg viewBox="-3 -3 60 60"><path class="b" d="M2 2H53V52H2Z"/><path fill="#fff" stroke="#0f6cbd" stroke-width="2" d="M20 2H53L40 22 22 30 14 52H2V30Z"/><path fill="#dc6f06" d="M-3-2H15V20L6 32-3 20ZM36 40H50V54H36ZM46 30L52 36 46 42Z"/><circle cx="6" cy="10" r="3" fill="#fff"/></svg>
      <svg viewBox="-3 -3 60 60"><path d="M27 2L40 8 53 27 40 42 27 53 14 42 1 27 14 8ZM14 14L40 42M40 14L14 42M27 2L14 14M27 2L40 14" fill="#f8effa" stroke="#8e3a9c" stroke-width="3.500"/></svg>
      <svg viewBox="-3 -3 60 60"><path d="M2 6H38L53 27 38 48H2L20 27ZM20 6L38 27M2 48L38 8M20 48L46 18" fill="#eef6fd" stroke="#1a86e0" stroke-width="3.500"/></svg>
    </div>
    <div class="more">...</div>
    <div class="wells">
      <label>Values</label>
      <div class="well">Add data fields here</div>
      <label class="bold">Drill through</label>
      <div class="toggle-row"><span>Cross-report</span><i class="tg off"><u></u>Off</i></div>
      <div class="toggle-row"><span>Keep all filters</span><i class="tg onn">On<u></u></i></div>
      <div class="well last">Add drill-through fields here</div>
    </div>
  </aside>

  <aside class="data">
    <div class="pane-head"><h2>Data</h2><svg class="dbl" viewBox="0 0 14 14"><path d="M1.500 1.500L7 7 1.500 12.500M7 1.500L12.500 7 7 12.500"/></svg></div>
    <div class="dsearch"><svg viewBox="0 0 15 15"><circle cx="6.500" cy="6.500" r="5"/><path d="M10.200 10.200L14 14"/></svg>Search</div>
    <div class="scroller">
      <ul class="fields">
        <li class="root"><svg class="tw" viewBox="0 0 12 8"><path d="M.5 1L6 6.500 11.500 1"/></svg><svg class="tbl" viewBox="0 0 14 14"><rect x="1" y="1" width="12" height="12" rx="2.500"/><path d="M5 1V13M9 1V13M1 5H13M1 9H13"/></svg><span>Sheet1</span></li>
        <li><s></s><i></i><svg class="fi" viewBox="0 0 14 14" fill="none" stroke="#323130" stroke-width="1.100"><path d="M12 5V1H3Q1 1 1 3V10Q1 12 3 12H6M5 1V12M1 4.500H12M1 8H7M13 8V7H8L10.500 10 8 13H13V12"/></svg><span>Avgdelvy</span></li>
        <li><s></s><i></i><b></b><span>Category</span></li>
        <li><s></s><i></i><b></b><span>City</span></li>
        <li><s></s><i></i><b></b><span>Country</span></li>
        <li><s></s><i></i><b></b><span>Customer ID</span></li>
        <li><s></s><i></i><b></b><span>Customer Na...</span></li>
        <li><s><svg viewBox="0 0 8 12"><path d="M1.500 1L7 6 1.500 11"/></svg></s><i></i><svg class="fi" viewBox="0 0 14 14" fill="none" stroke="#323130" stroke-width="1.200"><rect x="1" y="1.500" width="11.500" height="11" rx="2.500"/><path d="M1 4.500H12.500"/><path d="M3.500 7.500H10.500M3.500 10H8.500" stroke-dasharray="1.500 1.200"/></svg><span>Order Date</span></li>
        <li><s></s><i></i><b></b><span>Order ID</span></li>
        <li><s></s><i></i><b></b><span>Payment Mode</span></li>
        <li><s></s><i></i><b></b><span>Product ID</span></li>
        <li><s></s><i></i><b></b><span>Product Name</span></li>
        <li><s></s><i></i><svg class="fi"><use href="#sigma"/></svg><span>Profit</span></li>
        <li><s></s><i></i><svg class="fi"><use href="#sigma"/></svg><span>Quantity</span></li>
        <li><s></s><i></i><b></b><span>Region</span></li>
        <li><s></s><i></i><b></b><span>Returns</span></li>
        <li><s></s><i></i><svg class="fi"><use href="#sigma"/></svg><span>Row ID+O6G3...</span></li>
        <li><s></s><i></i><svg class="fi"><use href="#sigma"/></svg><span>Sales</span></li>
        <li><s></s><i></i><b></b><span>Segment</span></li>
      </ul>
      <div class="thumb"></div>
    </div>
  </aside>
</main>

<footer class="status">
  <span class="pg">Page 1 of 1</span>
  <svg class="zoomer" viewBox="0 0 124 16"><path d="M1 8.500H5M115.500 8.500H123M119.250 4.700V12.300" stroke="#484644" stroke-width="1.300"/><path d="M8 8.500H108" stroke="#605e5c"/><path d="M58.500 6V11" stroke="#605e5c"/><path d="M37 3V13" stroke="#605e5c" stroke-width="4"/></svg>
  <span class="pct">60%</span>
  <svg class="fit" viewBox="0 0 16 12" fill="none" stroke="#605e5c"><path d="M.5.500H15.500V11.500H.5Z"/><path stroke="#5a9a5a" d="M3 5V3H5.500M10.500 3H13V5M13 7.500V9.500H10.500M5.500 9.500H3V7.500"/></svg>
</footer>

<footer class="taskbar">
  <div class="start"><svg viewBox="0 0 16 16"><path d="M0 2.300L6.500 1.400V7.600H0ZM7.500 1.200L16 0V7.600H7.500ZM0 8.500H6.500V14.700L0 13.800ZM7.500 8.500H16V16L7.500 14.800Z"/></svg></div>
  <div class="find">
    <svg class="mag" viewBox="0 0 18 18" fill="none" stroke="#111" stroke-width="1.300"><circle cx="11" cy="6.500" r="5.300"/><path d="M7.200 10.300L1 16.500"/></svg>
    <span>Type here to search</span>
    <svg class="flowers" viewBox="768 402 240 117"><path fill="#5f8f3c" d="M768 519C800 496 860 500 900 496S980 496 1008 502V519Z"/><path d="M868 505C868 490 866 480 866 470M932 505C934 490 936 470 936 460" stroke="#4f9a3c" stroke-width="6"/><path fill="#62a84a" d="M926 500C900 490 896 470 894 456 912 468 926 482 926 500ZM936 500C942 480 950 466 962 458 962 480 952 494 936 500ZM866 500C852 494 846 484 846 474 858 480 866 490 866 500ZM872 500C876 484 884 476 894 474 890 490 882 498 872 500Z"/><path fill="#f6b90c" d="M840 464C838 454 844 450 848 452 856 444 862 442 868 446 876 442 884 446 886 452 894 448 900 454 898 460 894 478 884 494 868 492 852 490 844 478 840 464Z"/><path fill="#fbd12c" d="M892 440C888 424 894 414 902 418 908 408 918 404 932 410 946 402 956 410 960 418 970 412 974 424 972 436 966 464 954 486 934 490 912 488 896 464 892 440Z"/><path fill="#f0aa10" d="M916 420L932 470 948 418 956 440 934 490 910 440ZM856 454L868 482 880 454 884 468 868 492 850 470Z"/><path fill="#f2690c" d="M924 426L928 410 934 414 942 410 942 434 934 440 924 436ZM862 456L866 448 874 450 876 462 864 462Z"/><path fill="#5e3f8a" d="M812 450C814 464 828 474 844 484 846 500 836 512 822 512 806 512 798 500 800 486 802 474 812 466 812 450Z"/><circle cx="970" cy="495" r="17" fill="#e8a41c"/><circle cx="970" cy="495" r="14" fill="none" stroke="#f7c64a" stroke-width="6" stroke-dasharray="7 4"/><circle cx="970" cy="495" r="6" fill="#d06a10"/></svg>
  </div>
  <div class="apps">
  <div class="app"><svg viewBox="0 0 18 18" width="18" height="18" fill="none" stroke="#111" stroke-width="1.300"><path d="M2 1V3.500H11.500V1M2 6H11.500V12H2ZM2 17V14.500H11.500V17M15.500 1V3M15.500 9V17"/><path d="M14.200 4.500H16.800V7.500H14.200Z" fill="#111" stroke="none"/></svg></div>
  <div class="app"><svg width="23" height="21" viewBox="0 0 90 80"><use href="#copilot"/></svg></div>
  <div class="app run"><svg viewBox="0 0 26 26" width="26" height="26"><path fill="url(#edge)" d="M13 1C20 1 25 6 25 12 25 16 22 18 19 18 16 18 14.500 16.500 15.500 15 17 12 14 9 11 9 5 9 2 13 1.200 16 .5 8 5 1 13 1Z"/><path fill="#0d5bb5" d="M1 13C2 9 6 7.500 10 8 5 12 8 22 17 23 12 26 1 24 1 13Z"/><path fill="#1b9de0" d="M10.500 9C7 12 9 20 16 21.500 19 22 22 20.500 23.500 18.500 21 27 9 26.500 6.500 19 5 14 7 10 10.500 9Z"/></svg></div>
  <div class="app run"><svg viewBox="0 0 24 20" width="24" height="22"><path fill="#e8a317" d="M1 1H9L11 3H22V8H1Z"/><path fill="#fdd25c" d="M1 5H23V19H1Z"/><path fill="#2f8de0" d="M5 11H19V19H15V15H9V19H5Z"/></svg></div>
  <div class="app"><svg viewBox="0 0 24 24" width="25" height="25"><path fill="#1490df" d="M8 3L16 1 24 8V20H8Z"/><path fill="#50c8f4" d="M16 3H22V9H16Z"/><path fill="#0a5fb4" d="M7 12L15 17 24 11V21Q24 22 22 22H9Q7 22 7 20Z"/><path fill="#0f6cbd" d="M0 5H13V18H0Z"/><circle cx="6.500" cy="11.500" r="3.200" fill="none" stroke="#fff" stroke-width="1.800"/></svg></div>
  <div class="app run"><svg viewBox="0 0 24 24" width="23" height="23"><path fill="#fff" stroke="#1e7145" d="M12 4H23V20H12Z"/><path d="M14 7H22M14 10H22M14 13H22M14 16H22M18 6V18" stroke="#1e7145" stroke-width="1.500"/><path fill="#1e7145" d="M0 3L14 0V24L0 21Z"/><path d="M4 8L10 16M10 8L4 16" stroke="#fff" stroke-width="2"/></svg></div>
  <div class="app run"><svg viewBox="0 0 26 27" width="26" height="27"><circle cx="12" cy="12" r="12" fill="#f7c51e"/><path fill="#de3c2e" d="M1.600 6A12 12 0 0 1 22.400 6H12A6 6 0 0 0 6.500 14Z"/><path fill="#2aa24b" d="M1.600 6A12 12 0 0 0 11 24L15.500 17A6 6 0 0 1 7 15Z"/><circle cx="12" cy="12" r="6" fill="#fff"/><circle cx="12" cy="12" r="4.700" fill="#2a72e8"/><circle cx="18.500" cy="19" r="7.500" fill="#8a6a5c"/><text x="15" y="22.500" class="chm">M</text></svg></div>
  <div class="app run active"><svg viewBox="0 0 20 24" width="20" height="25"><rect x="10" y="0" width="9" height="24" rx="1" fill="url(#pbi)"/><rect x="6" y="6" width="8" height="18" rx="1" fill="#f0c63c"/><rect x="1" y="12" width="8" height="12" rx="1" fill="#fadb68"/></svg></div>
  <div class="app run"><svg viewBox="0 0 24 24" width="23" height="23"><path fill="#fff" stroke="#2b579a" d="M12 3H23V21H12Z"/><path d="M14 7H21M14 10H21M14 13H21M14 16H21" stroke="#2b579a" stroke-width="1.400"/><path fill="#2b579a" d="M0 3L14 0V24L0 21Z"/><path d="M3 8L5 16 7 9 9 16 11 8" stroke="#fff" stroke-width="1.500" fill="none"/></svg></div>
  </div>
  <div class="spacer"></div>
  <svg class="weather" viewBox="0 0 26 26"><circle cx="10" cy="12" r="8.500" fill="#f9a01b"/><path d="M0 8.500H16M1 13H20M0 17.500H20M4 21.500H16" stroke="#f6b73c" stroke-width="2"/><path d="M2 11H18M2 15H19M3 19.500H17" stroke="#d8600c" stroke-width="1"/><circle cx="17" cy="7" r="6.200" fill="#c4281c"/><text x="15" y="10" class="badge">1</text></svg>
  <span class="temp">30°C&nbsp; Haze</span>
  <svg class="tray" viewBox="0 0 112 18" fill="none" stroke="#111" stroke-width="1.300"><path d="M1 12L6.500 6 12 12"/><path d="M28 4.500H32.500Q34 4.500 34 6V12Q34 13.500 32.500 13.500H28Q26.500 13.500 26.500 12V6Q26.500 4.500 28 4.500ZM27 2.500C29 1 32 1 34 2.500M27 15.500C29 17 32 17 34 15.500M34 8L37 6V12L34 10"/><path d="M49.500 5H61.500V13H49.500ZM63 7.500V10.500"/><path d="M51.500 7H56V11H51.500Z" fill="#111"/><path d="M74 14L86 4M76 15C76 10 80 7 86 7M79.500 15.500C80 12 82 10.500 86 10.500M83 16C83.500 14.500 84.500 14 86 14" stroke-width="1"/><path d="M94 7H97L101 3.500V14.500L97 11H94ZM103.500 6.500C105 8 105 10 103.500 11.500M106 4.500C108.500 7 108.500 11 106 13.500M108.500 3C112 6.500 112 11.500 108.500 15" stroke-width="1.100"/></svg>
  <div class="two lang"><span>ENG</span><span>IN</span></div>
  <div class="two clock"><span>5:37 PM</span><span>3/11/2025</span></div>
  <svg class="note" viewBox="0 0 26 26"><path d="M1 1H18V14H9L5 18V14H1Z" fill="#111"/><path d="M4 4.500H15M4 7.500H15M4 10.500H12" stroke="#dce6ec" stroke-width="1.200"/><circle cx="17" cy="16" r="8" fill="#c9d2d8" stroke="#8a9298"/><text x="14" y="20.500" class="nn">1</text></svg>
</footer>
</body>
</html>
```

FILE: styles.css
```css
* { box-sizing: border-box; }
body { margin: 0; width: 1366px; height: 768px; overflow: hidden; display: flex; flex-direction: column; font-family: "Open Sans", "Noto Sans", sans-serif; font-size: 12px; letter-spacing: -.25px; color: #252423; background: #fff; }
svg { display: block; flex: none; overflow: visible; }
.defs { position: absolute; }

/* Title bar */
.titlebar { flex: none; height: 34px; background: #3b3a39; color: #fff; display: flex; align-items: center; padding-left: 16px; }
.titlebar svg { fill: none; stroke: #fff; stroke-width: 1.3; }
.ti-save { width: 17px; height: 17px; margin-right: 15px; }
.ti-undo { width: 15px; height: 16px; margin-right: 15px; }
.titlebar .dim { stroke: #6e6c6a; margin-right: 13px; }
.doc-name { width: 191px; white-space: nowrap; padding-top: 6px; letter-spacing: -.25px; }
.tri-down { border: 4px solid transparent; border-top: 5px solid #fff; border-bottom: 0; margin-left: 5px; }
.top-search { width: 400px; height: 24px; margin-left: 237px; background: #d4d3d1; color: #225a4d; display: flex; align-items: center; padding-left: 17px; font-size: 13.500px; border-radius: 1px; }
.top-search svg { width: 17px; height: 18px; margin-right: 10px; stroke: #323130; }
.signin { margin-left: 206px; width: 37px; white-space: nowrap; letter-spacing: -.2px; padding-top: 1px; }
.titlebar .avatar { width: 20px; height: 20px; margin-left: 9px; stroke: none; }
.titlebar .win-btns { width: 110px; height: 20px; margin-left: 23px; stroke-width: 1.2; }

/* Ribbon */
.ribbon { flex: none; height: 126px; background: #fafafa; position: relative; z-index: 2; box-shadow: 0 1px 4px rgba(0,0,0,.22); }
.tabs { height: 34px; display: flex; align-items: flex-start; padding: 6px 0 0 23px; font-size: 13.500px; letter-spacing: -.32px; }
.tab { height: 25px; line-height: 20px; white-space: nowrap; }
.t-file { width: 58px; } .t-home { width: 38px; margin-right: 32px; } .t-insert { width: 66px; } .t-model { width: 90px; } .t-view { width: 61px; } .t-opt { width: 88px; }
.tab.active { font-weight: 600; border-bottom: 3px solid #117865; letter-spacing: -.4px; }
.share { margin: -2px 6px 0 auto; width: 84px; height: 24px; border: 0; border-radius: 4px; background: #117865; color: #fff; display: flex; align-items: center; padding: 0 0 0 7px; gap: 9px; font: 12.500px "Open Sans", sans-serif; letter-spacing: -.5px; white-space: nowrap; }
.share svg { width: 16px; height: 15px; }
.share .chev { width: 10px; height: 8px; margin-left: -5px; }
.groups { height: 92px; padding: 2px 0 2px; display: flex; position: relative; }
.group { height: 88px; border-right: 1px solid #d2d0ce; display: flex; flex-direction: column; align-items: center; justify-content: space-between; }
.btns { display: flex; }
.group small { font-size: 9.600px; line-height: 12px; letter-spacing: -.1px; margin-bottom: -2px; }
.g-clip { width: 161px; } .g-data { width: 370px; } .g-query { width: 117px; } .g-insert { width: 147px; } .g-calc { width: 188px; } .g-sens { width: 74px; } .g-share { width: 59px; } .g-cop { width: 60px; }
.btn { display: flex; flex-direction: column; align-items: center; padding-top: 5px; }
.btn b { font-weight: 400; line-height: 16px; text-align: center; white-space: nowrap; letter-spacing: -.45px; }
.ico { width: 32px; height: 34px; margin-bottom: 1px; }
.caret { display: inline-block; width: 8px; height: 8px; margin-left: 1px; }
.disabled { color: #c2c0be; }
.w36 { width: 36px; } .w40 { width: 40px; } .w44 { width: 44px; } .w50 { width: 50px; } .w52 { width: 52px; } .w54 { width: 54px; } .w56 { width: 56px; } .w58 { width: 58px; } .w60 { width: 60px; } .w66 { width: 66px; } .w72 { width: 72px; } .w78 { width: 78px; }
.paste { width: 44px; }
.clip-list { display: flex; flex-direction: column; width: 104px; letter-spacing: -.4px; }
.clip-list span { display: flex; align-items: center; height: 24px; white-space: nowrap; }
.clip-list svg { width: 16px; height: 17px; margin-right: 4px; }
.g-clip .btns { align-self: flex-start; padding-left: 6px; gap: 2px; }
.fx { font: italic 54px "Liberation Serif", serif; fill: #a19f9d; stroke: none; letter-spacing: 0; }
.collapse { width: 10px; height: 8px; margin: 77px 0 0 176px; }

/* Work area */
.work { flex: none; height: 543px; display: flex; }
.rail { width: 41px; background: #f3f2f1; border-right: 1px solid #e1dfdd; }
.rail-item { height: 40px; display: flex; align-items: center; padding-left: 12px; border-left: 0 solid #117865; }
.rail-item.on { border-left-width: 3px; padding-left: 9px; }
.rail-item svg { width: 18px; height: 17px; }
.rail-item:nth-child(2) svg { margin-top: -2px; }
.rail-item:last-child svg { width: 19px; margin-left: -2px; }
.dax { font: 600 21px Roboto, sans-serif; fill: #605e5c; stroke: #f3f2f1; stroke-width: 4; paint-order: stroke; letter-spacing: 0; }
.stage { width: 930px; display: flex; flex-direction: column; }
.canvas { height: 508px; padding: 10px 0 0 81px; background: #fff; }
.report { position: relative; width: 768px; height: 432px; background: #09477f; box-shadow: 0 0 7px rgba(0,0,0,.3); display: flex; padding: 7px 0 0 16px; }
.tile { background: #436f9a; border: 1px solid #94489f; border-radius: 9px; overflow: hidden; }
.tile > svg { width: 100%; height: 100%; }
.left { width: 403px; }
.heading { width: 365px; height: 42px; margin-left: 15px; color: #fff; font: 700 18.500px/41px "Open Sans", sans-serif; letter-spacing: -.2px; text-align: center; }
.cards { display: flex; padding: 13px 0 16px 2px; height: 80px; }
.card { width: 75px; height: 51px; color: #fff; text-align: center; font-family: Roboto, sans-serif; letter-spacing: 0; margin-right: 31px; white-space: nowrap; }
.card:nth-child(2) { margin-right: 37px; } .card:nth-child(3) { margin-right: 30px; } .card:nth-child(4) { margin-right: 0; }
.card em { display: block; font: 500 9.800px/12px Roboto, sans-serif; padding-top: 3px; }
.card strong { display: block; font: 500 21.500px/28px Roboto, sans-serif; padding-top: 4px; letter-spacing: -.4px; }
.pair { display: flex; gap: 25px; }
.donuts { width: 138px; display: grid; grid-template-rows: 84px 84px 84px; row-gap: 20.500px; }
.trends { width: 240px; display: grid; grid-template-rows: 132px 132px; row-gap: 29px; }
.right { margin-left: 27px; width: 315px; }
.slicer { height: 33px; width: 314px; padding: 6.500px 0 0 18px; display: flex; gap: 1.500px; }
.slicer span { width: 68px; height: 18px; background: #fff; border: 1px solid #8a8886; color: #6b6967; font-size: 8px; line-height: 15px; text-align: center; letter-spacing: -.2px; }
.quad { display: grid; grid-template: 174px 175px / 141px 141px; gap: 21px 16px; padding-top: 12px; }
.selected { position: relative; overflow: visible; }
.selected::after { content: ""; position: absolute; inset: -1px; border: 1px solid #fff; }
.tools { position: absolute; left: 663px; top: 31px; display: flex; gap: 4px; }
.tools span { width: 24px; height: 20px; background: linear-gradient(#f5f0f4 0 8px, #eebfe0 8px 9px, #fff 9px); }
.tools svg { width: 24px; height: 20px; fill: none; stroke: #605e5c; stroke-width: 1.2; }
.tt { font: 500 10px Roboto, sans-serif; fill: #fff; letter-spacing: 0; }
.lb { font: 600 7px "Open Sans", sans-serif; fill: #fff; letter-spacing: 0; }
.lb.mo { text-anchor: end; letter-spacing: -.1px; font-weight: 400; font-size: 7.600px; }
.ring { fill: none; stroke-width: 9; }
.a1 { fill: #118dff; fill-opacity: .4; } .a2 { fill: #12239e; fill-opacity: .4; }
.l1, .l2 { fill: none; stroke: #118dff; stroke-width: 5.500; stroke-linejoin: round; }
.l2 { stroke: #12239e; }
.px { stroke-width: 1.800; }
.bar { fill: #4450b2; stroke: #424eae; stroke-width: 1; }
.cont { font: 19px Roboto, sans-serif; fill: #3b3a49; letter-spacing: 0; }
.ms { font: 600 12px "Open Sans", sans-serif; fill: #8a8a90; letter-spacing: 0; }
.copy { font: 600 13px "Open Sans", sans-serif; fill: #4a4a50; letter-spacing: 0; }
.terms { font: 13px "Open Sans", sans-serif; fill: #3a62a8; text-decoration: underline; letter-spacing: 0; }

.pages { height: 35px; background: #f3f2f1; display: flex; }
.dev { width: 24px; margin-left: 10px; padding: 6px 1px 0; }
.dev.on { height: 31px; border-bottom: 3px solid #117865; }
.dev svg { width: 20px; height: 16px; }
.dev.phone { margin-left: 23px; padding: 5px 0 0 2px; width: 20px; }
.dev.phone svg { width: 14px; height: 21px; }
.arr { border: 4px solid transparent; height: 8px; margin-top: 14px; }
.arr.l { border-right: 5px solid #c8c6c4; border-left: 0; margin-left: 17px; }
.arr.r { border-left: 5px solid #c8c6c4; border-right: 0; margin-left: 17px; }
.page-tab { width: 77px; margin-left: 6px; background: #fff; border-left: 1px solid #a19f9d; border-bottom: 4px solid #117865; font-weight: 600; text-align: center; line-height: 37px; letter-spacing: -.45px; border-right: 1px solid #a19f9d; }
.add { width: 39px; background: #117865; display: flex; align-items: center; justify-content: center; padding-bottom: 2px; }
.add svg { width: 11px; height: 11px; }

.filters { width: 34px; border-left: 1px solid #a19f9d; border-right: 1px solid #e1dfdd; display: flex; flex-direction: column; align-items: center; padding-top: 12px; background: #fff; }
.dbl { width: 14px; height: 14px; fill: none; stroke: #323130; stroke-width: 1.2; }
.funnel { width: 13px; height: 13px; margin: 15px 0 8px 3px; fill: none; stroke: #323130; stroke-width: 1.3; }
.filters span { writing-mode: vertical-rl; font-weight: 600; font-size: 14.500px; line-height: 18px; letter-spacing: -.1px; padding-right: 1px; }

.viz { width: 180px; background: #f3f2f1; display: flex; flex-direction: column; }
.pane-head { display: flex; justify-content: space-between; padding: 12px 7px 0 8px; height: 36px; }
.pane-head h2 { margin: -2px 0 0; font-size: 15px; line-height: 18px; font-weight: 600; letter-spacing: -.3px; }
.viz h3 { margin: 2px 0 3px 8px; font-size: 12px; line-height: 16px; font-weight: 600; letter-spacing: -.4px; }
.modes { display: flex; padding-left: 8px; gap: 37px; height: 36px; }
.mode.on { width: 32px; height: 32px; background: #d2d0ce; border-radius: 2px; }
.mode.on svg { width: 32px; height: 32px; }
.fmt svg { width: 27px; height: 27px; margin-top: 3px; }
.notch { width: 180px; height: 10px; }
.vgrid { display: grid; grid-template-columns: repeat(6, 20px); grid-auto-rows: 20px; gap: 8px; padding: 9px 0 0 10px; }
.vgrid svg { width: 20px; height: 20px; }
.k { fill: none; stroke: #3b3a39; stroke-width: 3; }
.b { fill: #83beec; stroke: #0f6cbd; stroke-width: 3; }
.g { fill: #c8c6c4; stroke: #797775; stroke-width: 3; }
.gk { fill: #c8c6c4; stroke: #605e5c; stroke-width: 3; }
.w { fill: #fff; stroke: #797775; stroke-width: 3; }
.w2 { fill: none; stroke: #3b3a39; stroke-width: 2.5; }
.wk { fill: #fff; stroke: #3b3a39; stroke-width: 3; }
.bolt { fill: #fcc46a; stroke: #dc6f06; stroke-width: 3; }
.n123 { font: 26px "Open Sans", sans-serif; fill: #2b88d8; letter-spacing: 0; }
.rpy { font: 700 43px "Open Sans", sans-serif; fill: #2a85c0; letter-spacing: 0; }
.more { font-weight: 600; padding: 6px 0 0 12px; height: 36px; line-height: 13px; font-size: 14px; letter-spacing: 2.400px; color: #3a4a6a; }
.wells { border-top: 1px solid #e1dfdd; padding: 9px 6px 0 4px; display: flex; flex-direction: column; font-size: 12px; letter-spacing: -.25px; white-space: nowrap; }
.wells label { line-height: 16px; padding-left: 8px; }
.wells .bold { font-weight: 600; color: #484644; padding-top: 11px; letter-spacing: -.35px; }
.well { height: 28px; margin-top: 5px; background: #fff; border: 1px dashed #bdbbb8; border-radius: 2px; line-height: 27px; padding-left: 10px; }
.well.last { height: 27px; padding-left: 8px; margin-top: 5px; }
.toggle-row { display: flex; justify-content: space-between; align-items: center; height: 27px; padding: 0 16px 0 8px; }
.wells .bold + .toggle-row { margin-top: 3px; }
.tg { width: 32px; height: 16px; border-radius: 8px; font-style: normal; font-size: 9.500px; display: flex; align-items: center; justify-content: space-between; padding: 0 4px; letter-spacing: -.3px; }
.tg u { width: 8px; height: 8px; border-radius: 50%; background: #605e5c; }
.off { background: #fff; border: 1px solid #797775; color: #797775; }
.onn { background: #117865; color: #fff; font-weight: 600; padding-left: 5px; }
.onn u { background: #fff; }

.data { width: 181px; background: #f3f2f1; border-left: 1px solid #e1dfdd; }
.dsearch { margin: 9px 4px 0; height: 24px; background: #fff; border: 1px solid #c8c6c4; border-bottom-color: #484644; border-radius: 3px; display: flex; align-items: center; font-size: 13px; color: #605e5c; letter-spacing: -.25px; padding-left: 12px; }
.dsearch svg { width: 15px; height: 15px; margin-right: 6px; fill: none; stroke: #484644; }
.scroller { display: flex; justify-content: space-between; padding: 8px 4px 0 0; }
.thumb { width: 8px; height: 378px; background: #c8c6c4; }
.fields { list-style: none; margin: 1px 0 0; padding: 0 0 0 26px; width: 168px; }
.fields li { height: 24px; display: flex; align-items: center; white-space: nowrap; letter-spacing: -.3px; }
.fields s { width: 18px; height: 12px; text-decoration: none; }
.fields s svg { width: 8px; height: 12px; margin-left: 3px; fill: none; stroke: #605e5c; stroke-width: 1.1; }
.fields i { width: 12px; height: 12px; border: 1px solid #797775; border-radius: 2px; margin-right: 7px; margin-top: -1px; background: #f7f6f5; }
.fields b, .fields .fi { width: 14px; height: 14px; margin-right: 5px; flex: none; }
.fields .fi { margin-top: -1px; }
.fields .root { margin-left: -13px; }
.tw { width: 12px; height: 8px; fill: none; stroke: #605e5c; margin-right: 4px; }
.tbl { width: 13px; height: 13px; fill: none; stroke: #323130; stroke-width: 1.2; margin-right: 5px; }

/* Status bar */
.status { flex: none; height: 25px; background: #f3f2f1; border-top: 1px solid #e1dfdd; border-bottom: 1px solid #000; display: flex; align-items: center; color: #484644; }
.pg { padding-left: 4px; width: 1154px; letter-spacing: -.18px; padding-top: 2px; }
.zoomer { width: 124px; height: 16px; }
.pct { margin-left: 12px; width: 23px; color: #605e5c; letter-spacing: -.5px; }
.fit { width: 16px; height: 12px; margin-left: 19px; }

/* Taskbar */
.taskbar { flex: none; height: 40px; background: linear-gradient(90deg, #cfdfe8, #d3dfe6 50%, #d6e2e9); display: flex; align-items: center; color: #111; }
.start { width: 48px; height: 40px; background: #d6e6b4; display: flex; align-items: center; justify-content: center; }
.start svg { width: 16px; height: 16px; }
.find { width: 288px; height: 40px; background: #fff; border: 1px solid #b8bec2; display: flex; align-items: center; padding-left: 11px; font-size: 14.500px; color: #333; letter-spacing: -.3px; overflow: hidden; }
.find span { width: 168px; margin-left: 11px; white-space: nowrap; }
.mag { width: 17px; height: 18px; }
.flowers { width: 80px; height: 39px; }
.apps { display: flex; width: 443px; }
.app { flex: 1; height: 40px; display: flex; align-items: center; justify-content: center; }
.run { background: linear-gradient(#0078d7, #0078d7) 50% 100% / 40px 2px no-repeat; }
.run.active { background: linear-gradient(#0078d7, #0078d7) 50% 100% / 48px 2px no-repeat, #ecf1f4; }
.chm { font: 8px Roboto, sans-serif; fill: #fff; }
.spacer { flex: 1; }
.weather { width: 26px; height: 26px; }
.badge { font: 8px Roboto, sans-serif; fill: #fff; }
.temp { width: 73px; margin: 0 20px 0 5px; white-space: nowrap; font-size: 13px; letter-spacing: -.05px; }
.tray { width: 112px; height: 18px; }
.two { display: flex; flex-direction: column; align-items: center; line-height: 18px; letter-spacing: -.4px; white-space: nowrap; padding-top: 1px; }
.lang { width: 40px; }
.clock { width: 62px; }
.note { width: 26px; height: 26px; margin: 0 15px 0 12px; }
.nn { font: 12px Roboto, sans-serif; fill: #111; }
```
